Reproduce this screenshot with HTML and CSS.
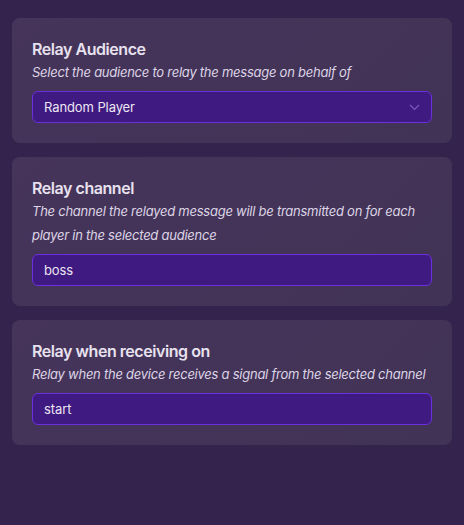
FILE: index.html
```html
<!DOCTYPE html>
<html lang="en">
<head>
    <meta charset="UTF-8">
    <meta name="viewport" content="width=device-width, initial-scale=1.0">
    <title>Relay Settings</title>
    <link rel="stylesheet" href="styles.css">
</head>
<body>
    <div class="panel">
        <div class="card">
            <div class="card-title">Relay Audience</div>
            <div class="card-desc">Select the audience to relay the message on behalf of</div>
            <div class="field select">
                <span>Random Player</span>
                <svg class="chevron" width="11" height="7" viewBox="0 0 11 7">
                    <path d="M1 1 L5.5 5.5 L10 1" fill="none" stroke="#7c5cb8" stroke-width="1.2"/>
                </svg>
            </div>
        </div>

        <div class="card">
            <div class="card-title">Relay channel</div>
            <div class="card-desc">The channel the relayed message will be transmitted on for each player in the selected audience</div>
            <div class="field"><span>boss</span></div>
        </div>

        <div class="card">
            <div class="card-title">Relay when receiving on</div>
            <div class="card-desc">Relay when the device receives a signal from the selected channel</div>
            <div class="field"><span>start</span></div>
        </div>
    </div>
</body>
</html>
```

FILE: styles.css
```css
body {
    margin: 0;
    background-color: #33234d;
    font-family: Inter, "Noto Sans", sans-serif;
    min-height: 525px;
}
.panel {
    display: flex;
    flex-direction: column;
    gap: 14px;
    padding: 18px 12px;
}
.card {
    background: linear-gradient(135deg, #46345a, #413356);
    border-radius: 8px;
    padding: 20px 20px 20px 20px;
}
.card-title {
    color: #e8e2ef;
    font-size: 16px;
    font-weight: 600;
    line-height: 22px;
    letter-spacing: -0.45px;
}
.card-desc {
    color: #ddd5e6;
    font-size: 13px;
    font-style: italic;
    line-height: 24px;
    letter-spacing: -0.25px;
}
.field {
    margin-top: 7px;
    height: 32px;
    box-sizing: border-box;
    background-color: #3f1a80;
    border: 1px solid #6a30dc;
    border-radius: 6px;
    padding: 0 11px;
    display: flex;
    align-items: center;
    justify-content: space-between;
    color: #ece6f3;
    font-size: 13px;
    letter-spacing: -0.1px;
}
```
